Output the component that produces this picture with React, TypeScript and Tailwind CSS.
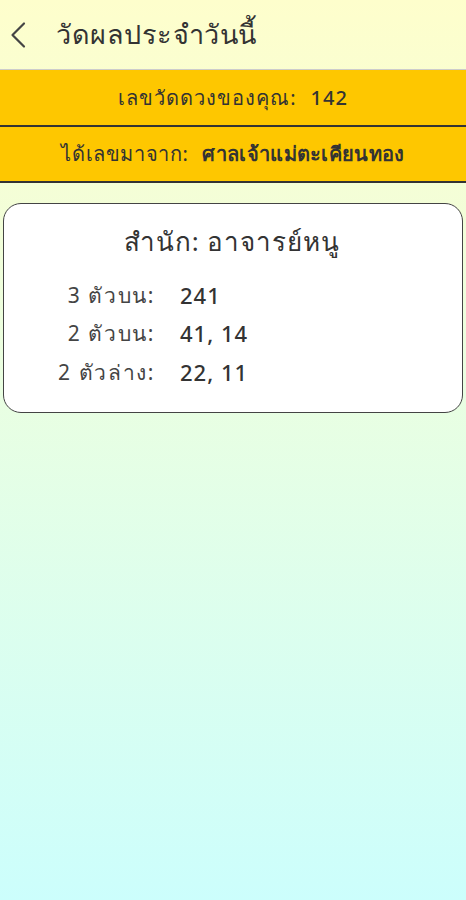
import React from "react";

export default function App() {
  const rows = [
    { label: "3 ตัวบน:", value: "241" },
    { label: "2 ตัวบน:", value: "41, 14" },
    { label: "2 ตัวล่าง:", value: "22, 11" },
  ];
  return (
    <div className="w-[466px] h-[900px] flex flex-col bg-gradient-to-b from-[#fefecc] to-[#ccfefc] font-['Noto_Sans','Liberation_Sans',sans-serif] text-[#333]">
      <div className="h-[69px] flex items-center">
        <div className="w-[34px] flex justify-center pl-[2px]">
          <svg width="20" height="28" viewBox="0 0 20 28" fill="none">
            <path d="M16 2.5 L4.5 14 L16 25.5" stroke="#444" strokeWidth="2.2" strokeLinecap="round" strokeLinejoin="round" />
          </svg>
        </div>
        <div className="pl-[22px] text-[27px] tracking-[0.5px] text-[#333]">วัดผลประจำวันนี้</div>
      </div>
      <div className="bg-[#fec700] border-t border-[#ccc] h-[56px] flex items-center justify-center text-[20px] tracking-[1px] text-[#333] gap-[14px]">
        <span>เลขวัดดวงของคุณ:</span>
        <span className="font-medium">142</span>
      </div>
      <div className="bg-[#fec700] border-t-[2px] border-b-[2px] border-[#333] h-[58px] flex items-center justify-center text-[20px] tracking-[0.6px] text-[#333] gap-[14px]">
        <span>ได้เลขมาจาก:</span>
        <span className="font-semibold tracking-[0.3px]">ศาลเจ้าแม่ตะเคียนทอง</span>
      </div>
      <div className="px-[3px] pt-[20px]">
        <div className="bg-white border-[1.5px] border-[#444] rounded-[18px] h-[210px] pt-[18px]">
          <div className="text-center text-[26px] tracking-[1px] text-[#333] pr-[2px]">สำนัก: อาจารย์หนู</div>
          <div className="mt-[18px] flex flex-col gap-[6px]">
            {rows.map((r) => (
              <div key={r.label} className="flex items-center h-[32.5px] text-[21px] text-[#444]">
                <div className="w-[151px] text-right tracking-[1.6px]">{r.label}</div>
                <div className="pl-[25px] font-medium text-[22px] tracking-[1px] text-[#333]">{r.value}</div>
              </div>
            ))}
          </div>
        </div>
      </div>
    </div>
  );
}
